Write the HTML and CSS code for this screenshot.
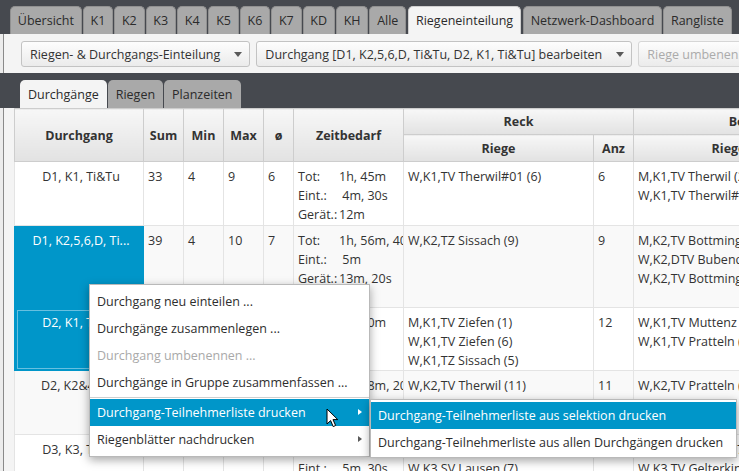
FILE: index.html
```html
<!DOCTYPE html>
<html lang="de">
<head>
<meta charset="utf-8">
<title>Riegeneinteilung</title>
<link rel="stylesheet" href="styles.css">
</head>
<body>
<div class="app">
  <nav class="tabs">
    <span class="tab">Übersicht</span>
    <span class="tab">K1</span>
    <span class="tab">K2</span>
    <span class="tab">K3</span>
    <span class="tab">K4</span>
    <span class="tab">K5</span>
    <span class="tab">K6</span>
    <span class="tab">K7</span>
    <span class="tab">KD</span>
    <span class="tab">KH</span>
    <span class="tab">Alle</span>
    <span class="tab active">Riegeneinteilung</span>
    <span class="tab">Netzwerk-Dashboard</span>
    <span class="tab">Rangliste</span>
  </nav>
  <div class="pane">
    <div class="toolbar">
      <div class="menubtn">Riegen- &amp; Durchgangs-Einteilung<span class="caret"></span></div>
      <div class="menubtn">Durchgang [D1, K2,5,6,D, Ti&amp;Tu, D2, K1, Ti&amp;Tu] bearbeiten<span class="caret"></span></div>
      <div class="menubtn disabled">Riege umbenennen</div>
    </div>
    <div class="subtabs">
      <span class="subtab active">Durchgänge</span>
      <span class="subtab">Riegen</span>
      <span class="subtab">Planzeiten</span>
    </div>
    <div class="tablearea">
      <table class="grid">
        <colgroup>
          <col class="c-dg"><col class="c-num"><col class="c-num"><col class="c-num"><col class="c-avg"><col class="c-zeit"><col class="c-riege"><col class="c-num"><col class="c-riege"><col class="c-num">
        </colgroup>
        <thead>
          <tr class="h1">
            <th rowspan="2">Durchgang</th>
            <th rowspan="2">Sum</th>
            <th rowspan="2">Min</th>
            <th rowspan="2">Max</th>
            <th rowspan="2">ø</th>
            <th rowspan="2">Zeitbedarf</th>
            <th colspan="2">Reck</th>
            <th colspan="2">Boden</th>
          </tr>
          <tr class="h2">
            <th>Riege</th>
            <th>Anz</th>
            <th>Riege</th>
            <th>Anz</th>
          </tr>
        </thead>
        <tbody>
          <tr class="r1">
            <td class="dg"><div class="dgtext">D1, K1, Ti&amp;Tu</div></td>
            <td>33</td><td>4</td><td>9</td><td>6</td>
            <td class="zeit"><div><span class="lbl">Tot:</span>1h, 45m</div><div><span class="lbl">Eint.:</span>&nbsp;4m, 30s</div><div><span class="lbl">Gerät.:</span>12m</div></td>
            <td><div>W,K1,TV Therwil#01 (6)</div></td>
            <td>6</td>
            <td><div>M,K1,TV Therwil (2)</div><div>W,K1,TV Therwil#02 (4)</div></td>
            <td>6</td>
          </tr>
          <tr class="r2 alt">
            <td class="dg sel"><div class="dgtext">D1, K2,5,6,D, Ti...</div></td>
            <td>39</td><td>4</td><td>10</td><td>7</td>
            <td class="zeit"><div><span class="lbl">Tot:</span>1h, 56m, 40s</div><div><span class="lbl">Eint.:</span>&nbsp;5m</div><div><span class="lbl">Gerät.:</span>13m, 20s</div></td>
            <td><div>W,K2,TZ Sissach (9)</div></td>
            <td>9</td>
            <td><div>M,K2,TV Bottmingen (2)</div><div>W,K2,DTV Bubendorf (3)</div><div>W,K2,TV Bottmingen (4)</div></td>
            <td>9</td>
          </tr>
          <tr class="r3">
            <td class="dg sel focus"><div class="dgtext">D2, K1, Ti&amp;Tu</div></td>
            <td>12</td><td>1</td><td>6</td><td>4</td>
            <td class="zeit"><div><span class="lbl">Tot:</span>1h, 40m</div><div><span class="lbl">Eint.:</span>&nbsp;4m</div><div><span class="lbl">Gerät.:</span>12m</div></td>
            <td><div>M,K1,TV Ziefen (1)</div><div>W,K1,TV Ziefen (6)</div><div>W,K1,TZ Sissach (5)</div></td>
            <td>12</td>
            <td><div>W,K1,TV Muttenz (5)</div><div>W,K1,TV Pratteln (7)</div></td>
            <td>12</td>
          </tr>
          <tr class="r4 alt">
            <td class="dg"><div class="dgtext">D2, K2&amp;4, Ti...</div></td>
            <td>11</td><td>5</td><td>6</td><td>5</td>
            <td class="zeit"><div><span class="lbl">Tot:</span>1h, 58m, 20s</div><div><span class="lbl">Eint.:</span>&nbsp;5m</div><div><span class="lbl">Gerät.:</span>13m</div></td>
            <td><div>W,K2,TV Therwil (11)</div></td>
            <td>11</td>
            <td><div>W,K2,TV Pratteln (11)</div></td>
            <td>11</td>
          </tr>
          <tr class="r5">
            <td class="dg"><div class="dgtext">D3, K3, Ti&amp;Tu</div></td>
            <td>14</td><td>7</td><td>7</td><td>7</td>
            <td class="zeit"><div><span class="lbl">Tot:</span>2h, 10m</div><div><span class="lbl">Eint.:</span>&nbsp;5m, 30s</div><div><span class="lbl">Gerät.:</span>14m</div></td>
            <td><div>W,K3,TV Gelterkinden (7)</div><div>W,K3,SV Lausen (7)</div></td>
            <td>14</td>
            <td><div>W,K3,SV Lausen (7)</div><div>W,K3,TV Gelterkinden (7)</div></td>
            <td>14</td>
          </tr>
        </tbody>
      </table>
    </div>
  </div>

  <div class="ctxmenu">
    <div class="item">Durchgang neu einteilen ...</div>
    <div class="item">Durchgänge zusammenlegen ...</div>
    <div class="item disabled">Durchgang umbenennen ...</div>
    <div class="item">Durchgänge in Gruppe zusammenfassen ...</div>
    <div class="sep"></div>
    <div class="item hl sub">Durchgang-Teilnehmerliste drucken<span class="arrow"></span></div>
    <div class="item sub">Riegenblätter nachdrucken<span class="arrow"></span></div>
  </div>

  <div class="submenu">
    <div class="item hl">Durchgang-Teilnehmerliste aus selektion drucken</div>
    <div class="item">Durchgang-Teilnehmerliste aus allen Durchgängen drucken</div>
  </div>

  <svg class="cursor" width="14" height="21" viewBox="0 0 14 21">
    <path d="M1 1 L1 16 L4.6 12.6 L7.2 18.6 L9.6 17.5 L7 11.6 L11.8 11.6 Z" fill="#fff" stroke="#000" stroke-width="1" stroke-linejoin="round"/>
  </svg>
</div>
</body>
</html>
```

FILE: styles.css
```css
* { box-sizing: border-box; }

html, body {
  margin: 0;
  padding: 0;
}

body {
  width: 739px;
  height: 471px;
  overflow: hidden;
  background: #46494f;
  font-family: "Open Sans", "Noto Sans", sans-serif;
  font-size: 12.5px;
  color: #333;
}

.app {
  position: relative;
  width: 739px;
  height: 471px;
  overflow: hidden;
}

/* main tabs */
.tabs {
  display: flex;
  align-items: flex-end;
  gap: 1px;
  height: 34px;
  padding: 6px 0 0 10px;
}

.tab {
  flex: none;
  height: 28px;
  padding: 0 6.8px;
  display: flex;
  align-items: center;
  background: #a9a9a9;
  border: 1px solid #919191;
  border-bottom: none;
  border-radius: 5px 5px 0 0;
  color: #2b2b2b;
  white-space: nowrap;
}

.tab.active {
  background: #f4f4f4;
  border-color: #d0d0d0;
  margin: 0 1px;
}

/* pane */
.pane {
  background: #f4f4f4;
  height: 437px;
}

.toolbar {
  display: flex;
  gap: 6px;
  height: 39px;
  padding: 7px 0 0 21px;
  white-space: nowrap;
  background: linear-gradient(to right, #ececec 0 3px, #8a8a8a 3px 4px, #f4f4f4 4px);
}

.menubtn {
  flex: none;
  display: flex;
  align-items: center;
  height: 26px;
  padding: 0 7px 0 8px;
  border: 1px solid #c3c3c3;
  border-radius: 3px;
  background: linear-gradient(#fdfdfd, #ebebeb);
  color: #333;
}

.menubtn.disabled {
  color: #ababab;
  border-color: #d6d6d6;
}

.caret {
  width: 0;
  height: 0;
  margin-left: 14px;
  border-left: 4px solid transparent;
  border-right: 4px solid transparent;
  border-top: 5px solid #5a5a5a;
}

/* sub tabs */
.subtabs {
  display: flex;
  align-items: flex-end;
  gap: 1px;
  height: 35px;
  padding: 7px 0 0 20px;
  background: #46494f;
}

.subtab {
  flex: none;
  height: 28px;
  padding: 0 8px;
  display: flex;
  align-items: center;
  background: #a9a9a9;
  border-radius: 5px 5px 0 0;
  color: #2b2b2b;
}

.subtab.active {
  background: #f4f4f4;
}

/* table */
.tablearea {
  height: 363px;
  overflow: hidden;
  padding-left: 14px;
  background: linear-gradient(to right, #ececec 0 3px, #8a8a8a 3px 4px, #f4f4f4 4px);
}

.grid {
  border-collapse: collapse;
  table-layout: fixed;
  width: 849px;
  background: #fff;
  line-height: 19px;
}

.c-dg { width: 129px; }
.c-num { width: 40px; }
.c-avg { width: 30px; }
.c-zeit { width: 110px; }
.c-riege { width: 190px; }

.grid th {
  background: linear-gradient(#f7f7f7, #e2e2e2);
  border: 1px solid #cdcdcd;
  font-weight: bold;
  color: #333;
  padding: 0 3px;
  white-space: nowrap;
  overflow: hidden;
}

.grid .h1 th { height: 26px; }
.grid .h2 th { height: 27px; }

.grid td {
  border: 1px solid #e4e4e4;
  vertical-align: top;
  padding: 5px 4px 0;
  white-space: nowrap;
  overflow: hidden;
  color: #333;
}

.grid tr.alt td { background: #f9f9f9; }

.r1 td { height: 64px; }
.r2 td { height: 82px; }
.r3 td { height: 62px; }
.r4 td { height: 64px; }
.r5 td { height: 64px; }

.grid td.dg {
  padding: 5px 0 0 4px;
  text-align: center;
}

.dgtext {
  overflow: hidden;
  text-overflow: ellipsis;
}

.grid tr td.sel {
  background: #0096c9;
  color: #fff;
  border-color: #0096c9;
}

.grid td.focus {
  outline: 1px solid #67c0e0;
  outline-offset: -3px;
}

.lbl {
  display: inline-block;
  width: 41px;
}

/* context menu */
.ctxmenu, .submenu {
  position: absolute;
  background: #fff;
  border: 1px solid #b9b9b9;
  box-shadow: 0 3px 9px rgba(0, 0, 0, 0.35);
  color: #2e2e2e;
  white-space: nowrap;
}

.ctxmenu {
  left: 89px;
  top: 284px;
  width: 281px;
  padding: 3px 0;
}

.submenu {
  left: 370px;
  top: 399px;
  width: 367px;
  padding: 2px 0 1px;
}

.item {
  position: relative;
  height: 27px;
  display: flex;
  align-items: center;
  padding-left: 7px;
}

.item.disabled { color: #a9a9a9; }

.item.hl {
  background: #0096c9;
  color: #fff;
}

.sep {
  height: 1px;
  margin: 1px 0;
  background: #cfcfcf;
}

.arrow {
  position: absolute;
  right: 7px;
  top: 10px;
  width: 0;
  height: 0;
  border-top: 3.5px solid transparent;
  border-bottom: 3.5px solid transparent;
  border-left: 4px solid #5a5a5a;
}

.item.hl .arrow { border-left-color: #fff; }

.cursor {
  position: absolute;
  left: 326px;
  top: 408px;
}
```
